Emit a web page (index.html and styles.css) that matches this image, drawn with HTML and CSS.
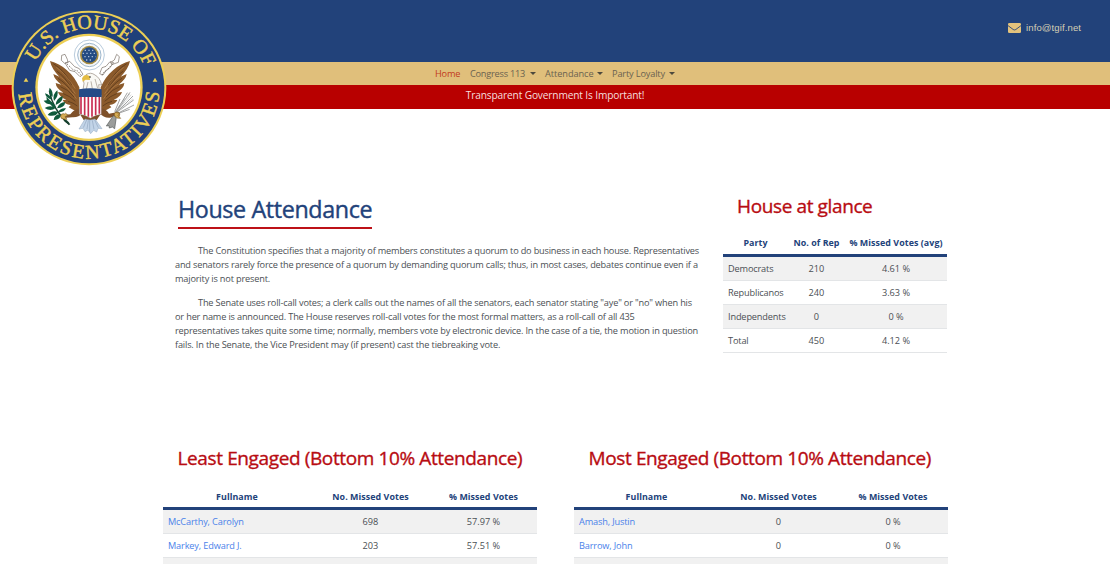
FILE: index.html
```html
<!DOCTYPE html>
<html lang="en">
<head>
<meta charset="utf-8">
<title>House Attendance</title>
<link rel="stylesheet" href="styles.css">
</head>
<body>
<header class="site-header">
  <div class="top-bar">
    <a class="contact" href="#">
      <svg class="mail" viewBox="0 0 13 10"><rect width="13" height="10" rx="1.3"/><path d="M0 2.6 5.2 6.5Q6.5 7.4 7.8 6.5L13 2.6"/></svg>
      <span class="contact-text">info@tgif.net</span>
    </a>
  </div>
  <nav class="nav">
    <a class="nav-item home">Home</a>
    <a class="nav-item congress">Congress 113<i class="caret"></i></a>
    <a class="nav-item attendance">Attendance<i class="caret"></i></a>
    <a class="nav-item loyalty">Party Loyalty<i class="caret"></i></a>
  </nav>
  <div class="slogan">Transparent Government Is Important!</div>
  <svg class="seal" viewBox="0 0 540 540">
    <defs>
      <path id="arc-top" d="M107 186A178 178 0 0 1 267 86A178 178 0 0 1 440 223"/>
      <path id="arc-bottom" d="M56 282A212 212 0 0 0 267 476A212 212 0 0 0 478 250"/>
      <g id="wing">
        <path fill="#8b5a2b" d="M150 183Q178 190 200 210Q224 230 238 262L240 330Q222 334 206 322L212 315Q194 314 188 300L199 299Q178 291 174 276L190 278Q168 265 167 249L184 254Q162 237 160 222L178 230Q155 207 150 183Z"/>
        <path fill="none" stroke="#5d3b1d" stroke-width="2.5" d="M160 191Q194 211 216 255M170 213Q194 228 216 268M174 235Q197 248 219 280M181 260Q204 267 222 291M190 281Q210 288 226 304M204 304Q220 308 232 318"/>
        <path fill="none" stroke="#bd8850" stroke-width="1.8" d="M169 202Q199 224 226 266M179 229Q202 245 226 281M185 252Q207 263 229 296"/>
      </g>
    </defs>
    <circle cx="267" cy="264" r="232" fill="#edcf55"/>
    <circle cx="267" cy="264" r="226" fill="#20407a"/>
    <circle cx="267" cy="262" r="161" fill="#edcf55"/>
    <circle cx="267" cy="262" r="154" fill="#fff"/>
    <text class="seal-text"><textPath href="#arc-top" textLength="413">U.S. HOUSE OF</textPath></text>
    <text class="seal-text"><textPath href="#arc-bottom" textLength="634">REPRESENTATIVES</textPath></text>
    <path fill="#edcf55" d="M78 233l7 12h-14zM465 233l7 12h-14z"/>
    <circle cx="268" cy="165" r="45" fill="#fff" stroke="#b8cbdc" stroke-width="3"/>
    <circle cx="268" cy="165" r="35" fill="#f5f7f8" stroke="#9db7cd" stroke-width="3"/>
    <circle cx="268" cy="165" r="28" fill="#a88d40"/>
    <circle cx="268" cy="165" r="23" fill="#244b83"/>
    <path fill="none" stroke="#a9bdd6" stroke-width="4" stroke-dasharray="4 7" d="M254 151h30M248 160h43M253 170h34M258 180h22"/>
    <use href="#wing"/>
    <use href="#wing" transform="translate(540 0) scale(-1 1)"/>
    <g fill="#fff" stroke="#756b62" stroke-width="2">
      <path d="M185 166l10-3 7 15 2 10-10 2-10-9zM195 189l14-5 15 16 14 6 11 17-9 7-15-15-16-4z"/>
      <path d="M350 163l8 7-3 17-17 6-7-5 12-8zM341 188l-13 17-9 5-10 15-10-4 7-18 12-4 12-14z"/>
    </g>
    <path fill="none" stroke="#625951" stroke-width="3" stroke-dasharray="3 4" d="M202 193l17 16 14 4 11 13M336 193l-15 18-9 5-7 12"/>
    <path fill="#7f512a" d="M241 325q-19 2-30 18l-15 1 2 9 19-1q20 1 29-13zM301 324q20 4 26 17l23-4 3 8-22 8q-20 2-32-14zM238 340h66l-14 20q-20 8-39 0z"/>
    <path fill="#c2d4e8" stroke="#8fa5bd" stroke-width="1.5" d="M255 357 237 387l12-2 6 10 9-5 8 11 9-10 9 5 4-11 12 1-21-29q-15 6-30 0z"/>
    <path fill="none" stroke="#8399b2" stroke-width="1.5" d="m260 360-10 23m15-22-4 26m8-26v34m8-34 5 27m2-28 11 23"/>
    <path fill="#f9f8f4" stroke="#93877b" stroke-width="2" d="m249 270 3-19q-5-18 6-27 14-9 27 1 15 8 20 30l-9-1 2 17z"/>
    <path fill="none" stroke="#9a8f85" stroke-width="2" d="m264 246-5 21m14-23 4 22m8-29 8 28"/>
    <path fill="#e5bd43" d="M269 229q-15-10-23 6l2 10 9-6 13 1z"/>
    <circle cx="270" cy="231" r="2.5" fill="#252525"/>
    <path fill="#fff" stroke="#846a5f" stroke-width="1.5" d="M238 285h66v58q-17 2-33 12-15-10-33-12z"/>
    <path stroke="#c82c51" stroke-width="5" d="M243 289v53m11-53v56m11-56v61m11-61v61m11-61v56m11-56v52"/>
    <path fill="#244a86" d="M237 268q34-6 68 0v23h-68z"/>
    <path fill="none" stroke="#173e2d" stroke-width="4" d="M148 272q10 58 60 102"/>
    <path fill="#0f5a3c" d="M149 263q12 12 8 28-14-12-8-28zM135 280q17 5 21 19-18-4-21-19zM172 271q5 17-10 32-6-20 10-32zM131 302q18-4 29 9-18 6-29-9zM188 288q2 18-21 27 1-20 21-27zM134 324q16-10 33 0-15 12-33 0zM196 306q-2 17-25 19 6-18 25-19zM143 345q12-16 32-9-9 17-32 9zM198 325q-8 14-23 11 6-13 23-11zM161 360q2-18 22-17-2 18-22 17zM139 290l28 28-3 8-23-22z"/>
    <path fill="#153f2d" d="M188 355q15 4 23 19-18-4-23-19z"/>
    <path fill="none" stroke="#8f9090" stroke-width="2.5" d="m347 340 43-63m-40 60 49-49m-50 50 52-38m-50 41 51-26m-52 27 39-14m-41 9 34-59m-36 58 27-40m-29 39 16-38"/>
    <path fill="none" stroke="#c7c8c8" stroke-width="2" d="m352 332 42-48m-41 51 46-39m-39 19 30-33"/>
    <path fill="#9b9d9b" stroke="#555958" stroke-width="2" d="m340 347-21 31 8-1 1 7 9-3 7 5 5-35z"/>
    <g fill="#d5ac55" stroke="#7c571f" stroke-width="2"><circle cx="190" cy="349" r="8"/><circle cx="351" cy="344" r="8"/><path d="m196 339 8 7-9 4 6 8-12-1m157-20 13 3-5 7 8 8-12-1"/></g>
  </svg>
</header>
<main class="content">
  <section class="intro">
    <div class="article">
      <h1 class="page-title">House Attendance</h1>
      <p class="para"><span class="line first wide">The Constitution specifies that a majority of members constitutes a quorum to do business in each house. Representatives</span>
      <span class="line wide">and senators rarely force the presence of a quorum by demanding quorum calls; thus, in most cases, debates continue even if a</span>
      <span class="line">majority is not present.</span></p>
      <p class="para"><span class="line first">The Senate uses roll-call votes; a clerk calls out the names of all the senators, each senator stating "aye" or "no" when his</span>
      <span class="line">or her name is announced. The House reserves roll-call votes for the most formal matters, as a roll-call of all 435</span>
      <span class="line">representatives takes quite some time; normally, members vote by electronic device. In the case of a tie, the motion in question</span>
      <span class="line">fails. In the Senate, the Vice President may (if present) cast the tiebreaking vote.</span></p>
    </div>
    <div class="glance">
      <h2 class="heading glance-title">House at glance</h2>
      <table class="table">
        <colgroup><col class="g1"><col class="g2"><col class="g3"></colgroup>
        <thead><tr><th>Party</th><th>No. of Rep</th><th>% Missed Votes (avg)</th></tr></thead>
        <tbody>
          <tr><td>Democrats</td><td>210</td><td>4.61 %</td></tr>
          <tr><td>Republicanos</td><td>240</td><td>3.63 %</td></tr>
          <tr><td>Independents</td><td>0</td><td>0 %</td></tr>
          <tr><td>Total</td><td>450</td><td>4.12 %</td></tr>
        </tbody>
      </table>
    </div>
  </section>
  <section class="rankings">
    <div class="ranking least">
      <h2 class="heading">Least Engaged (Bottom 10% Attendance)</h2>
      <table class="table">
        <colgroup><col class="l1"><col class="l2"><col class="l3"></colgroup>
        <thead><tr><th>Fullname</th><th>No. Missed Votes</th><th>% Missed Votes</th></tr></thead>
        <tbody>
          <tr><td><a class="link">McCarthy, Carolyn</a></td><td>698</td><td>57.97 %</td></tr>
          <tr><td><a class="link">Markey, Edward J.</a></td><td>203</td><td>57.51 %</td></tr>
          <tr><td></td><td></td><td></td></tr>
        </tbody>
      </table>
    </div>
    <div class="ranking most">
      <h2 class="heading">Most Engaged (Bottom 10% Attendance)</h2>
      <table class="table">
        <colgroup><col class="m1"><col class="m2"><col class="m3"></colgroup>
        <thead><tr><th>Fullname</th><th>No. Missed Votes</th><th>% Missed Votes</th></tr></thead>
        <tbody>
          <tr><td><a class="link">Amash, Justin</a></td><td>0</td><td>0 %</td></tr>
          <tr><td><a class="link">Barrow, John</a></td><td>0</td><td>0 %</td></tr>
          <tr><td></td><td></td><td></td></tr>
        </tbody>
      </table>
    </div>
  </section>
</main>
</body>
</html>
```
FILE: styles.css
```css
* { box-sizing: border-box; }
body {
  margin: 0;
  height: 564px;
  overflow: hidden;
  background: #fff;
  color: #4b4f54;
  font: 9.2px/14px "Open Sans", "Noto Sans", sans-serif;
}
.site-header { position: relative; height: 109px; }
.top-bar { height: 62px; background: #22427a; display: flex; justify-content: flex-end; padding: 21px 29px 0 0; }
.contact { display: flex; gap: 5px; height: 13px; align-items: center; text-decoration: none; color: #d5cfb4; font: 9.5px/13px "Liberation Sans", sans-serif; }
.mail { width: 13px; height: 10px; fill: #e3c27c; }
.mail path { fill: none; stroke: #22427a; stroke-width: .9; }
.contact-text { width: 55px; white-space: nowrap; letter-spacing: .12px; }
.nav { height: 23px; background: #e0bf7b; display: flex; padding-left: 435px; color: #6a6250; line-height: 23px; white-space: nowrap; letter-spacing: -.15px; }
.nav-item { display: flex; align-items: center; justify-content: space-between; }
.home { width: 25px; margin-right: 10px; color: #c13a1c; }
.congress { width: 66px; margin-right: 9px; letter-spacing: -.22px; }
.attendance { width: 58px; margin-right: 9px; letter-spacing: -.05px; }
.loyalty { width: 63px; }
.caret { border: 3px solid transparent; border-top-color: #4c493d; border-bottom: 0; }
.slogan { height: 24px; background: #b80000; color: #f6dede; font-size: 10.2px; line-height: 21px; text-align: center; white-space: nowrap; letter-spacing: -.16px; }
.seal { position: absolute; left: 0; top: 0; width: 180px; height: 180px; }
.seal-text { font: 60px "Liberation Serif", serif; fill: #edcf55; stroke: #edcf55; stroke-width: 1.4; }
.content { padding-left: 163px; }
.intro { display: flex; height: 335px; padding: 83px 0 0 12px; }
.article { width: 548px; }
.page-title { margin: 0 0 15px 3px; height: 37px; width: 194px; border-bottom: 2px solid #bd1118; font-size: 23.3px; line-height: 34px; font-weight: 400; -webkit-text-stroke: .4px #22427a; letter-spacing: -.37px; color: #22427a; white-space: nowrap; }
.para { margin: 0 0 9.5px; }
.line { display: block; white-space: nowrap; letter-spacing: -.168px; }
.wide { letter-spacing: -.187px; }
.first { padding-left: 23px; }
.glance { width: 224px; }
.heading { margin: 0 0 0 14.5px; height: 37px; font-size: 19px; line-height: 28px; font-weight: 400; -webkit-text-stroke: .35px #b80c12; letter-spacing: -.38px; color: #b80c12; white-space: nowrap; }
.glance-title { margin-left: 14px; }
.table { width: 100%; border-collapse: separate; border-spacing: 0; table-layout: fixed; white-space: nowrap; }
.table th { height: 28px; padding: 2px 0 0; border-bottom: 3px solid #22427a; color: #22427a; font-weight: 700; text-align: center; font-size: 8.9px; letter-spacing: .06px; }
.table td { height: 24px; padding: 0; text-align: center; border-bottom: 1px solid #e3e5e7; }
.table td:first-child { text-align: left; padding-left: 5px; letter-spacing: -.15px; }
.table tbody tr:nth-child(odd) { background: #f1f1f1; }
.g1 { width: 65px; }
.g2 { width: 57px; }
.g3 { width: 102px; }
.rankings { display: flex; gap: 37px; }
.rankings .heading { height: 38px; }
.rankings .table th { padding-top: 4px; }
.ranking { width: 374px; }
.l1 { width: 148px; }
.l2 { width: 119px; }
.l3 { width: 107px; }
.m1 { width: 145px; }
.m2 { width: 119px; }
.m3 { width: 110px; }
.link { color: #4a82ea; }
```
